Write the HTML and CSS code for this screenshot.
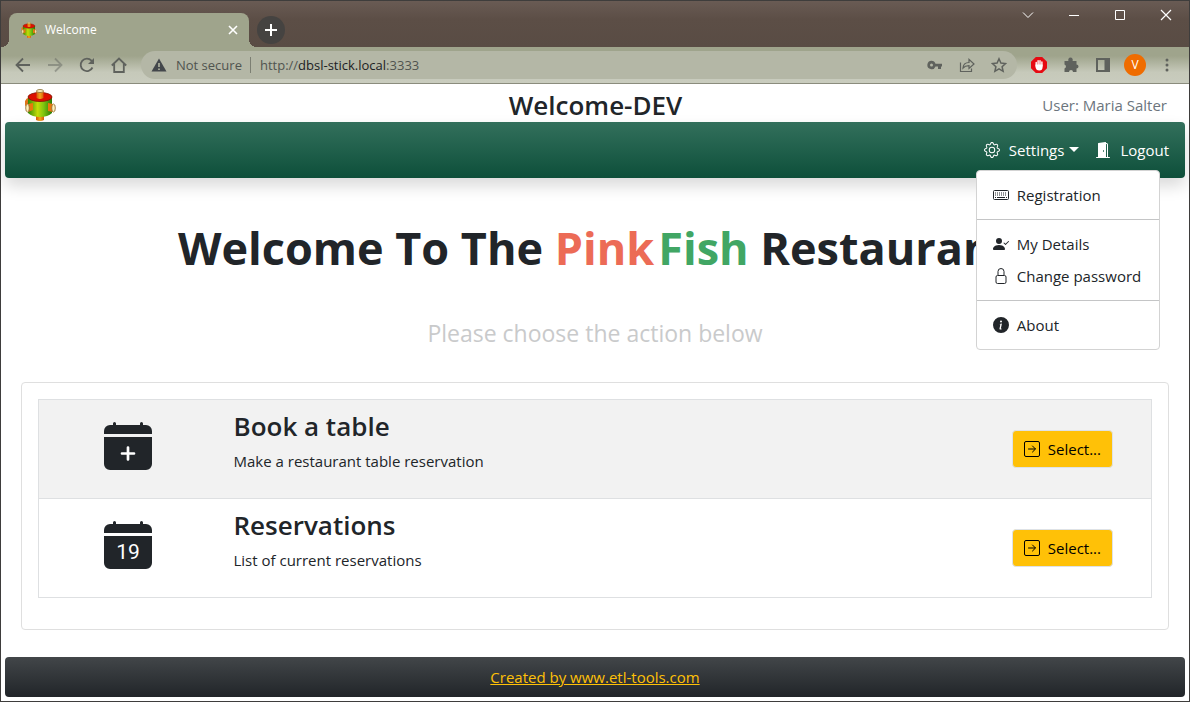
FILE: index.html
```html
<!DOCTYPE html>
<html lang="en">
<head>
<meta charset="utf-8">
<title>Welcome</title>
<link rel="stylesheet" href="styles.css">
</head>
<body>
<svg class="defs" aria-hidden="true">
  <defs>
    <linearGradient id="barrel" x1="0" x2="1" y1="0" y2="0">
      <stop offset="0" stop-color="#2f8a08"/><stop offset=".4" stop-color="#c3dc08"/><stop offset=".65" stop-color="#7fc410"/><stop offset="1" stop-color="#257a08"/>
    </linearGradient>
    <linearGradient id="pipe" x1="0" x2="1" y1="0" y2="0">
      <stop offset="0" stop-color="#d85a08"/><stop offset=".5" stop-color="#f2a51c"/><stop offset="1" stop-color="#d85a08"/>
    </linearGradient>
    <symbol id="logo" viewBox="0 0 32 32">
      <path d="M12 27h8v4q-4 2-8 0z" fill="url(#pipe)"/>
      <path d="M1 12q2-4 5-3v9q-4 2-5-2z" fill="#df7418"/>
      <path d="M4 8v16q4 4 12 4t12-4V8z" fill="url(#barrel)"/>
      <ellipse cx="16" cy="8" rx="12" ry="4.500" fill="#dc1000" stroke="#7d1608" stroke-width=".8"/>
      <path d="M12.500 2h7v7q-3.500 2-7 0z" fill="url(#pipe)"/>
      <ellipse cx="16" cy="2" rx="3.500" ry="1.500" fill="#fff1b8" stroke="#81672c" stroke-width=".8"/>
      <path d="M4 15l5-1v7l-5 2zM24 14l5 1v8l-5-1z" fill="#e9780c"/>
      <ellipse cx="3.500" cy="19" rx="1.800" ry="4" fill="#fff0bb" stroke="#8c642c" stroke-width=".8"/>
      <ellipse cx="29.500" cy="19" rx="1.800" ry="4" fill="#fff0bb" stroke="#8c642c" stroke-width=".8"/>
    </symbol>
    <symbol id="arrow-square" viewBox="0 0 16 16">
      <rect x=".5" y=".5" width="15" height="15" rx="1.500" fill="none" stroke="currentColor"/>
      <path d="M4.500 8h6.700M8.500 5l3 3-3 3" fill="none" stroke="currentColor" stroke-linecap="round" stroke-linejoin="round"/>
    </symbol>
  </defs>
</svg>

<header class="browser">
  <div class="tabstrip">
    <div class="tab">
      <svg class="tab-logo"><use href="#logo"/></svg>
      <span class="tab-title">Welcome</span>
      <button class="plain" aria-label="Close tab"><svg class="i10" viewBox="0 0 10 10"><path d="M1 1l8 8M9 1L1 9" fill="none" stroke="#fff" stroke-width="1.600"/></svg></button>
    </div>
    <button class="new-tab" aria-label="New tab"><svg class="i12" viewBox="0 0 12 12"><path d="M6 0v12M0 6h12" stroke="#fff" stroke-width="2"/></svg></button>
    <div class="window-buttons">
      <button class="plain" aria-label="Search tabs"><svg class="i12" viewBox="0 0 12 12"><path d="M1 3.500l5 5 5-5" fill="none" stroke="#fff"/></svg></button>
      <button class="plain" aria-label="Minimize"><svg class="i12" viewBox="0 0 12 12"><path d="M1 6.500h10" stroke="#fff"/></svg></button>
      <button class="plain" aria-label="Maximize"><svg class="i12" viewBox="0 0 12 12"><path d="M1.500 1.500h9v9h-9z" fill="none" stroke="#fff"/></svg></button>
      <button class="plain" aria-label="Close window"><svg class="i12" viewBox="0 0 12 12"><path d="M1 1l10 10M11 1L1 11" fill="none" stroke="#fff" stroke-width="1.200"/></svg></button>
    </div>
  </div>
  <div class="toolbar">
    <div class="nav-buttons">
      <button class="plain" aria-label="Back"><svg class="i16" viewBox="0 0 16 16"><path d="M15 8H2M8 1.500L1.500 8 8 14.500" fill="none" stroke="currentColor" stroke-width="1.800"/></svg></button>
      <button class="plain faded" aria-label="Forward"><svg class="i16" viewBox="0 0 16 16"><path d="M1 8h13M8 1.500L14.500 8 8 14.500" fill="none" stroke="currentColor" stroke-width="1.800"/></svg></button>
      <button class="plain" aria-label="Reload"><svg class="i16" viewBox="0 0 16 16"><path d="M13.500 10.500A6.200 6.200 0 1 1 12.500 3.700L14 5.200" fill="none" stroke="currentColor" stroke-width="1.800"/><path d="M15 1v6H9z" fill="currentColor"/></svg></button>
      <button class="plain" aria-label="Home"><svg class="i16" viewBox="0 0 16 16"><path d="M.8 8.500L8 1.500l7.200 7M3.200 7v8h9.600V7" fill="none" stroke="currentColor" stroke-width="1.800"/></svg></button>
    </div>
    <div class="address">
      <svg class="i16" viewBox="0 0 16 16"><path d="M8 1.500L15.500 14.500H.5z" fill="#43474b"/><path d="M8 6v4M8 11.500v1.500" stroke="#b3b7a4" stroke-width="1.600"/></svg>
      <span class="insecure">Not secure</span>
      <span class="url">http://<b>dbsl-stick.local</b>:3333</span>
      <div class="address-icons">
        <svg class="i16" viewBox="0 0 16 16"><path fill-rule="evenodd" d="M4.500 3.800a4.200 4.200 0 0 1 4 2.900H15v2.800h-1V12h-3V9.500H8.500a4.200 4.200 0 1 1-4-5.700zm0 2.800a1.500 1.500 0 1 0 0 3 1.500 1.500 0 0 0 0-3z" fill="currentColor"/></svg>
        <svg class="i16" viewBox="0 0 16 16"><path d="M1.500 5.500v9h11v-3M4 11c.3-4 2.500-5.500 6-5.500V2.300L15 7l-5 4.500V8.700C7.500 8.700 5.500 9.200 4 11z" fill="none" stroke="currentColor" stroke-width="1.200"/></svg>
        <svg class="i16" viewBox="0 0 16 16"><path d="M8 1.800l1.900 4.300 4.700.5-3.500 3.100 1 4.600L8 11.900l-4.100 2.400 1-4.600-3.500-3.100 4.700-.5z" fill="none" stroke="currentColor" stroke-width="1.500"/></svg>
      </div>
    </div>
    <div class="extensions">
      <svg class="i16" viewBox="0 0 16 16"><path d="M4.800 0h6.400L16 4.800v6.400L11.200 16H4.800L0 11.200V4.800z" fill="#e60a12"/><path d="M5.200 9V5.500M7.100 8V3.700M9 8V3.700M10.900 9V5" stroke="#fff" stroke-width="1.400" stroke-linecap="round"/><path d="M4.500 7.500h7.100V10q0 3.500-3.300 3.500T4.500 10z" fill="#fff"/></svg>
      <svg class="i16" viewBox="0 0 16 16"><path d="M1.500 4h4a2.300 2.300 0 1 1 4 0h4v3.500a2 2 0 1 1 0 4V15H10a2 2 0 0 0-4 0H1.500v-3.500a2.100 2.100 0 0 0 0-4z" fill="currentColor"/></svg>
      <svg class="i16" viewBox="0 0 16 16"><path fill-rule="evenodd" d="M1 1h14v14H1zm2 2v10h6.500V3z" fill="currentColor"/></svg>
      <span class="avatar">V</span>
      <button class="plain" aria-label="Menu"><svg class="dots" viewBox="0 0 4 14"><circle cx="2" cy="2" r="1.500"/><circle cx="2" cy="7" r="1.500"/><circle cx="2" cy="12" r="1.500"/></svg></button>
    </div>
  </div>
</header>

<div class="page">
  <header class="masthead">
    <svg class="brand-logo"><use href="#logo"/></svg>
    <h2 class="site-name">Welcome-DEV</h2>
    <span class="user">User: Maria Salter</span>
  </header>

  <nav class="navbar">
    <div class="dropdown">
      <a class="nav-link" href="#settings">
        <svg class="i16" viewBox="0 0 16 16" fill="currentColor"><path d="M8 4.754a3.246 3.246 0 1 0 0 6.492 3.246 3.246 0 0 0 0-6.492zM5.754 8a2.246 2.246 0 1 1 4.492 0 2.246 2.246 0 0 1-4.492 0z"/><path d="M9.796 1.343c-.527-1.790-3.065-1.790-3.592 0l-.094.319a.873.873 0 0 1-1.255.52l-.292-.16c-1.640-.892-3.433.902-2.540 2.541l.159.292a.873.873 0 0 1-.52 1.255l-.319.094c-1.790.527-1.790 3.065 0 3.592l.319.094a.873.873 0 0 1 .52 1.255l-.16.292c-.892 1.640.901 3.434 2.541 2.540l.292-.159a.873.873 0 0 1 1.255.52l.094.319c.527 1.790 3.065 1.790 3.592 0l.094-.319a.873.873 0 0 1 1.255-.52l.292.16c1.640.893 3.434-.902 2.540-2.541l-.159-.292a.873.873 0 0 1 .52-1.255l.319-.094c1.790-.527 1.790-3.065 0-3.592l-.319-.094a.873.873 0 0 1-.52-1.255l.16-.292c.893-1.640-.902-3.433-2.541-2.540l-.292.159a.873.873 0 0 1-1.255-.52l-.094-.319zm-2.633.283c.246-.835 1.428-.835 1.674 0l.094.319a1.873 1.873 0 0 0 2.693 1.115l.291-.16c.764-.415 1.600.42 1.184 1.185l-.159.292a1.873 1.873 0 0 0 1.116 2.692l.318.094c.835.246.835 1.428 0 1.674l-.319.094a1.873 1.873 0 0 0-1.115 2.693l.16.291c.415.764-.42 1.600-1.185 1.184l-.291-.159a1.873 1.873 0 0 0-2.693 1.116l-.094.318c-.246.835-1.428.835-1.674 0l-.094-.319a1.873 1.873 0 0 0-2.692-1.115l-.292.16c-.764.415-1.600-.42-1.184-1.185l.159-.291A1.873 1.873 0 0 0 1.945 8.930l-.319-.094c-.835-.246-.835-1.428 0-1.674l.319-.094A1.873 1.873 0 0 0 3.060 4.377l-.16-.292c-.415-.764.42-1.600 1.185-1.184l.292.159a1.873 1.873 0 0 0 2.692-1.115l.094-.319z"/></svg>
        <span class="caret-label">Settings</span>
      </a>
      <ul class="menu">
        <li><a href="#registration"><svg class="i16" viewBox="0 0 16 16"><rect x=".5" y="3.500" width="15" height="9" rx="1" fill="none" stroke="currentColor"/><path d="M2 6h12M2 8h12" stroke="currentColor" stroke-dasharray="1 1"/><path d="M2 10.500h1M4 10.500h8M13 10.500h1" stroke="currentColor"/></svg>Registration</a></li>
        <li class="split"><a href="#details"><svg class="i16" viewBox="0 0 16 16" fill="currentColor"><path d="M15.854 5.146a.5.5 0 0 1 0 .708l-3 3a.5.5 0 0 1-.708 0l-1.500-1.500a.5.5 0 0 1 .708-.708L12.500 7.793l2.646-2.647a.5.5 0 0 1 .708 0z"/><path d="M1 14s-1 0-1-1 1-4 6-4 6 3 6 4-1 1-1 1H1zm5-6a3 3 0 1 0 0-6 3 3 0 0 0 0 6z"/></svg>My Details</a></li>
        <li><a href="#password"><svg class="i16" viewBox="0 0 16 16"><path d="M5 7V3.500a3 3 0 0 1 6 0V7M4.500 7.500h7q1.500 0 1.500 1.500v5q0 1.500-1.500 1.500h-7q-1.500 0-1.500-1.500V9q0-1.500 1.500-1.500z" fill="none" stroke="currentColor"/></svg>Change password</a></li>
        <li class="split"><a href="#about"><svg class="i16" viewBox="0 0 16 16" fill="currentColor"><path d="M8 16A8 8 0 1 0 8 0a8 8 0 0 0 0 16zm.93-9.412-1 4.705c-.07.34.029.533.304.533.194 0 .487-.07.686-.246l-.088.416c-.287.346-.92.598-1.465.598-.703 0-1.002-.422-.808-1.319l.738-3.468c.064-.293.006-.399-.287-.47l-.451-.081.082-.381 2.290-.287zM8 5.500a1 1 0 1 1 0-2 1 1 0 0 1 0 2z"/></svg>About</a></li>
      </ul>
    </div>
    <a class="nav-link" href="#logout">
      <svg class="i16" viewBox="0 0 16 16" fill="currentColor"><path d="M1.500 15a.5.5 0 0 0 0 1h13a.5.5 0 0 0 0-1H13V2.500A1.500 1.500 0 0 0 11.500 1H11V.5a.5.5 0 0 0-.57-.495l-7 1A.5.5 0 0 0 3 1.500V15H1.500zM11 2h.5a.5.5 0 0 1 .5.5V15h-1V2zm-2.500 8c-.276 0-.5-.448-.5-1s.224-1 .5-1 .5.448.5 1-.224 1-.5 1z"/></svg>
      Logout
    </a>
  </nav>

  <main>
    <h1 class="hero">Welcome To The <span class="pink">Pink</span><span class="fish">Fish</span> Restaurant</h1>
    <p class="lead">Please choose the action below</p>
    <section class="card">
      <table class="actions">
        <tbody>
          <tr>
            <td class="icon-cell"><svg class="i48" viewBox="0 0 16 16"><path fill="currentColor" d="M4 .5a.5.5 0 0 0-1 0V1H2a2 2 0 0 0-2 2v1h16V3a2 2 0 0 0-2-2h-1V.5a.5.5 0 0 0-1 0V1H4zM16 14V5H0v9a2 2 0 0 0 2 2h12a2 2 0 0 0 2-2z"/><path d="M8 8.500v4M6 10.500h4" stroke="#fff" stroke-width=".9" stroke-linecap="round"/></svg></td>
            <td><h3>Book a table</h3><p>Make a restaurant table reservation</p></td>
            <td class="button-cell"><button class="select"><svg class="i16"><use href="#arrow-square"/></svg>Select...</button></td>
          </tr>
          <tr>
            <td class="icon-cell"><svg class="i48" viewBox="0 0 16 16"><path fill="currentColor" d="M4 .5a.5.5 0 0 0-1 0V1H2a2 2 0 0 0-2 2v1h16V3a2 2 0 0 0-2-2h-1V.5a.5.5 0 0 0-1 0V1H4zM16 14V5H0v9a2 2 0 0 0 2 2h12a2 2 0 0 0 2-2z"/><text class="day" x="8" y="12.800">19</text></svg></td>
            <td><h3>Reservations</h3><p>List of current reservations</p></td>
            <td class="button-cell"><button class="select"><svg class="i16"><use href="#arrow-square"/></svg>Select...</button></td>
          </tr>
        </tbody>
      </table>
    </section>
  </main>

  <footer class="footer"><a href="#etl">Created by www.etl-tools.com</a></footer>
</div>
</body>
</html>
```
FILE: styles.css
```css
* { box-sizing: border-box; }

body {
  margin: 0;
  min-height: 100vh;
  display: flex;
  flex-direction: column;
  border: 1px solid #3e3d3c;
  background: #fff;
  color: #212529;
  font: 15px/24px "Open Sans", "Noto Sans", sans-serif;
}

h1, h2, h3, p, ul { margin: 0; padding: 0; }
svg { display: block; flex: none; }
button { font: inherit; color: inherit; }

.defs { position: absolute; width: 0; height: 0; }
.i10 { width: 10px; height: 10px; }
.i12 { width: 12px; height: 12px; }
.i16 { width: 16px; height: 16px; }
.i48 { width: 48px; height: 48px; }
.plain { display: flex; padding: 0; border: 0; background: none; }

/* Browser frame */
.browser { font-size: 13px; line-height: 16px; }

.tabstrip {
  display: flex;
  align-items: flex-start;
  height: 46px;
  padding-left: 8px;
  background: linear-gradient(#695b54, #5c4e46 40%, #594c44);
}

.tab {
  position: relative;
  display: flex;
  align-items: center;
  gap: 8px;
  width: 240px;
  height: 34px;
  margin-top: 12px;
  padding: 0 11px 0 12px;
  border-radius: 8px 8px 0 0;
  background: #9fa48c;
  color: #fff;
  font-size: 12px;
}
.tab::before,
.tab::after {
  content: "";
  position: absolute;
  bottom: 0;
  width: 8px;
  height: 8px;
}
.tab::before { right: 100%; background: radial-gradient(circle at 0 0, transparent 8px, #9fa48c 8px); }
.tab::after { left: 100%; background: radial-gradient(circle at 100% 0, transparent 8px, #9fa48c 8px); }
.tab-logo { width: 16px; height: 16px; }
.tab-title { flex: 1; }

.new-tab {
  display: flex;
  align-items: center;
  justify-content: center;
  width: 28px;
  height: 28px;
  margin: 15px 0 0 8px;
  padding: 0;
  border: 0;
  border-radius: 50%;
  background: #454341;
}

.window-buttons { display: flex; gap: 34px; margin: 8px 17px 0 auto; }

.toolbar {
  display: flex;
  align-items: center;
  height: 37px;
  padding: 0 16px 0 14px;
  border-bottom: 1px solid #8b8c7d;
  background: linear-gradient(#9fa48c 25%, #c6c9ba 70%, #c9ccbe);
  color: #5f625d;
}
.nav-buttons { display: flex; gap: 16px; }
.faded { opacity: .45; }

.address {
  flex: 1;
  display: flex;
  align-items: center;
  gap: 9px;
  height: 28px;
  margin-left: 14px;
  padding: 0 10px;
  border-radius: 14px;
  background: #b4b7a6;
}
.insecure { padding-right: 8px; border-right: 1px solid #7c7f73; color: #50544f; }
.url { color: #50544f; }
.url b { color: #202124; font-weight: 400; }
.address-icons { display: flex; gap: 16px; margin-left: auto; }

.extensions { display: flex; align-items: center; gap: 16px; margin-left: 14px; }
.avatar {
  width: 22px;
  height: 22px;
  margin: 0 -3px;
  border-radius: 50%;
  background: #ef6c00;
  color: #fff;
  font-size: 12px;
  line-height: 22px;
  text-align: center;
}
.dots { width: 4px; height: 14px; margin: 0 4px 0 6px; fill: currentColor; }

/* Page */
.page {
  flex: 1;
  display: flex;
  flex-direction: column;
  padding: 0 4px 4px;
}

.masthead {
  display: grid;
  grid-template-columns: 1fr auto 1fr;
  align-items: center;
  height: 38px;
  padding: 4px 18px 0 19px;
}
.brand-logo { width: 32px; height: 32px; }
.site-name { font-size: 26px; line-height: 34px; font-weight: 600; }
.user { justify-self: end; color: #6c757d; }

.navbar {
  display: flex;
  align-items: center;
  justify-content: flex-end;
  gap: 16px;
  min-height: 56px;
  padding: 0 16px;
  border-radius: 4px;
  background: linear-gradient(#33705c, #0d4f3a);
  box-shadow: 0 8px 16px rgba(0, 0, 0, .15);
}
.nav-link {
  display: flex;
  align-items: center;
  gap: 9px;
  color: #fff;
  text-decoration: none;
}
.caret-label::after {
  content: "";
  display: inline-block;
  margin-left: 5px;
  vertical-align: 4px;
  border: 5px solid transparent;
  border-top-color: #fff;
  border-bottom: 0;
}
.dropdown { position: relative; }
.menu {
  position: absolute;
  top: 32px;
  left: -8px;
  z-index: 1;
  width: 184px;
  padding: 8px 0;
  border: 1px solid #d3d3d3;
  border-radius: 4px;
  background: #fff;
  list-style: none;
}
.menu a {
  display: flex;
  align-items: center;
  gap: 8px;
  padding: 4px 16px;
  color: #212529;
  text-decoration: none;
  white-space: nowrap;
}
.menu .split { margin-top: 8px; padding-top: 8px; border-top: 1px solid #c4c5c6; }

main { padding: 41px 16px 0; }
.hero {
  font-size: 45px;
  line-height: 58px;
  font-weight: 700;
  text-align: center;
}
.pink { color: #ec6b56; }
.fish { color: #41a664; margin-left: 4px; }
.lead {
  margin-top: 38px;
  color: #c9cacb;
  font-size: 23px;
  line-height: 36px;
  text-align: center;
}

.card {
  margin-top: 31px;
  padding: 16px 16px 31px;
  border: 1px solid #dfdfdf;
  border-radius: 4px;
}
.actions {
  width: 100%;
  border: 1px solid #dee2e6;
  border-collapse: collapse;
}
.actions tr { border: 1px solid #dee0e2; }
.actions tr:first-child { background: #f2f2f2; }
.actions td { padding: 8px; vertical-align: top; }
.actions .icon-cell { width: 187px; padding: 22px 8px 8px 65px; }
.actions .button-cell { width: 156px; padding: 30px 38px 0 0; }
.actions h3 { font-size: 26px; line-height: 36px; font-weight: 600; margin-bottom: 5px; }
.actions p { margin-bottom: 17px; }
.day { fill: #fff; font: 7px Roboto, sans-serif; text-anchor: middle; }

.select {
  display: flex;
  align-items: center;
  gap: 8px;
  margin-left: auto;
  padding: 6px 11px;
  border: 1px solid #dee2e6;
  border-radius: 4px;
  background: #ffc107;
  color: #000;
}

.footer {
  margin-top: auto;
  padding: 8px;
  border-radius: 4px;
  background: linear-gradient(#424649, #212529);
  text-align: center;
}
.footer a { color: #ffc107; }
```
